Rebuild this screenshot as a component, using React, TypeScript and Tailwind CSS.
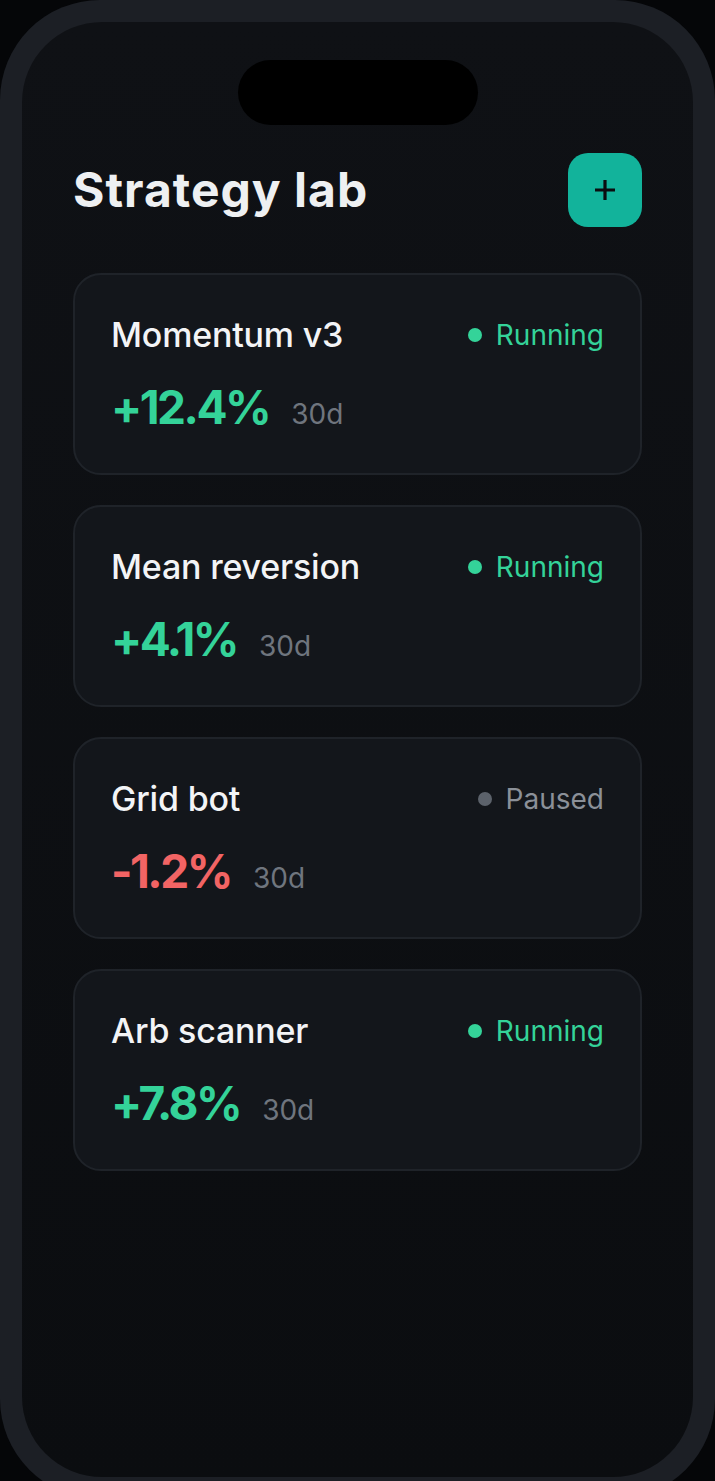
const strategies = [
  { name: "Momentum v3", status: "Running", change: "+12.4%", up: true },
  { name: "Mean reversion", status: "Running", change: "+4.1%", up: true },
  { name: "Grid bot", status: "Paused", change: "-1.2%", up: false },
  { name: "Arb scanner", status: "Running", change: "+7.8%", up: true },
];

function StrategyCard({ name, status, change, up }: (typeof strategies)[number]) {
  const running = status === "Running";
  return (
    <div className="rounded-[28px] border-2 border-[#1f2329] bg-[#13161b] px-[36px] pt-[40px] pb-[38px]">
      <div className="flex items-center justify-between">
        <span className="text-[34px] leading-[40px] font-medium text-[#f3f4f6] tracking-[-0.2px]">{name}</span>
        <span className="flex items-center gap-[14px]">
          <span className={`h-[14px] w-[14px] rounded-full ${running ? "bg-[#34d399]" : "bg-[#5c626b]"}`} />
          <span className={`text-[28px] leading-[40px] ${running ? "text-[#34d399]" : "text-[#8b9098]"}`}>{status}</span>
        </span>
      </div>
      <div className="mt-[26px] flex items-baseline gap-[22px]">
        <span className={`text-[46px] leading-[52px] font-bold tracking-[-2.5px] ${up ? "text-[#34d399]" : "text-[#f26464]"}`}>
          {change}
        </span>
        <span className="text-[28px] text-[#6f757e]">30d</span>
      </div>
    </div>
  );
}

export default function App() {
  return (
    <div className="min-h-screen bg-[#050608] font-['Inter',sans-serif]">
      <div className="h-[1499px] w-[715px] rounded-[100px] bg-[#1c1f25] p-[22px]">
        <div className="flex h-full flex-col rounded-[80px] bg-gradient-to-b from-[#0f1115] to-[#0b0d10]">
          <div className="mx-auto mt-[38px] h-[65px] w-[240px] rounded-full bg-black" />

          <div className="mt-[28px] flex items-center justify-between px-[51px]">
            <h1 className="text-[48px] font-bold tracking-[1px] text-[#eef0f2]">Strategy lab</h1>
            <button className="flex h-[74px] w-[74px] items-center justify-center rounded-[20px] bg-[#12b39b]">
              <svg width="24" height="24" viewBox="0 0 24 24" fill="none" stroke="#0b0d10" strokeWidth="3.2" strokeLinecap="butt">
                <path d="M12 2v20M2 12h20" />
              </svg>
            </button>
          </div>

          <div className="mt-[46px] flex flex-col gap-[30px] px-[51px]">
            {strategies.map((s) => (
              <StrategyCard key={s.name} {...s} />
            ))}
          </div>
        </div>
      </div>
    </div>
  );
}
